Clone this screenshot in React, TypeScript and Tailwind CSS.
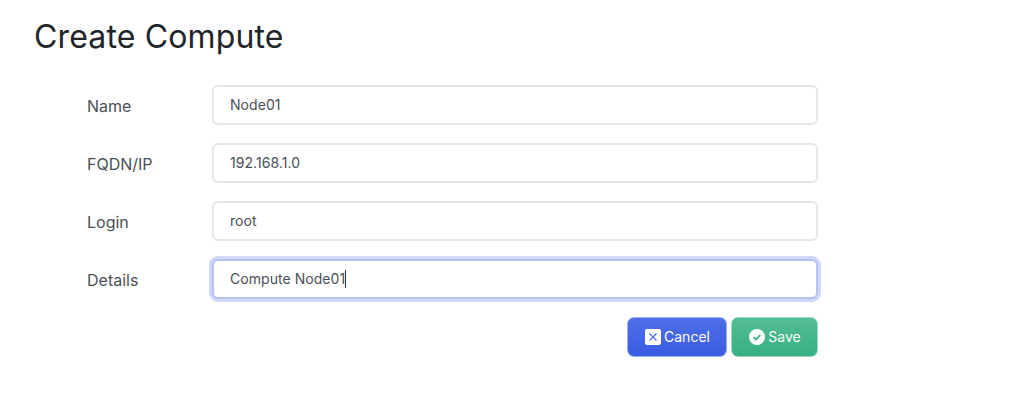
const fields = [
  { label: 'Name', value: 'Node01' },
  { label: 'FQDN/IP', value: '192.168.1.0' },
  { label: 'Login', value: 'root' },
];

export default function App() {
  return (
    <div className="w-[1024px] h-[410px] bg-white overflow-hidden font-['Inter',sans-serif] pt-[17px] pl-[34px]">
      <h1 className="text-[32px] leading-[40px] font-normal tracking-[0.15px] text-[#212529]">Create Compute</h1>

      <form className="mt-[28px] ml-[53px] w-[731px] flex flex-col gap-[18px]">
        {fields.map((f) => (
          <div key={f.label} className="flex items-center h-[40px]">
            <label className="w-[125px] pt-[1px] text-[16px] text-[#495057]">{f.label}</label>
            <div className="flex-1 h-[40px] flex items-center px-[16px] pb-[1px] rounded-[6px] border-2 border-[#e4e7ea] bg-white text-[14px] tracking-[0.05px] text-[#495057]">
              {f.value}
            </div>
          </div>
        ))}

        {/* focused input */}
        <div className="flex items-center h-[40px]">
          <label className="w-[125px] pt-[1px] text-[16px] text-[#495057]">Details</label>
          <div className="flex-1 h-[40px] flex items-center px-[16px] pb-[1px] rounded-[6px] border-2 border-[#b5c0f5] ring-[3px] ring-[#cfd7fa] bg-white text-[14px] tracking-[0.05px] text-[#495057]">
            Compute Node01
            <span className="w-px h-[18px] bg-[#333]" />
          </div>
        </div>

        <div className="flex justify-end gap-[4px]">
          <button type="button" className="w-[100px] h-[40px] pl-[1px] pb-[1px] flex items-center justify-center gap-[3px] rounded-[7px] border border-[#9db0f1] bg-gradient-to-b from-[#4e6fe6] to-[#3b5ce4] text-white text-[14px]">
            <span className="w-[16px] h-[16px] rounded-[2px] bg-white flex items-center justify-center">
              <svg width="10" height="10" viewBox="0 0 10 10" fill="none" stroke="#4466e8" strokeWidth="1.1">
                <path d="M1.5 1.5l7 7M8.5 1.5l-7 7" />
              </svg>
            </span>
            Cancel
          </button>
          <button type="button" className="w-[87px] h-[40px] pl-[1px] pb-[1px] flex items-center justify-center gap-[3px] rounded-[7px] border border-[#9cd9c0] bg-gradient-to-b from-[#52bd92] to-[#36b083] text-white text-[14px]">
            <svg width="16" height="16" viewBox="0 0 16 16">
              <circle cx="8" cy="8" r="8" fill="#fff" />
              <path d="M4.5 8.2l2.4 2.4 4.4-4.6" fill="none" stroke="#3bb286" strokeWidth="1.8" />
            </svg>
            Save
          </button>
        </div>
      </form>
    </div>
  );
}
